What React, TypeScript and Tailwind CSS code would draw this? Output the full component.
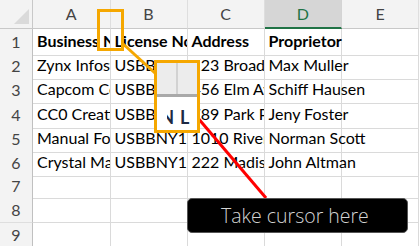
const cols = ['A', 'B', 'C', 'D', 'E']

const rows: string[][] = [
  ['Business Name', 'License No', 'Address', 'Proprietor'],
  ['Zynx Infosys', 'USBBNY1234', '123 Broadway', 'Max Muller'],
  ['Capcom Co', 'USBBNY1235', '456 Elm Ave', 'Schiff Hausen'],
  ['CC0 Creations', 'USBBNY1236', '789 Park Pl', 'Jeny Foster'],
  ['Manual Fox', 'USBBNY1237', '1010 River Rd', 'Norman Scott'],
  ['Crystal Mart', 'USBBNY1238', '222 Madison', 'John Altman'],
  [],
  [],
  [],
]

const grid = 'grid grid-cols-[33px_77.5px_77px_77px_77.5px_77px]'

export default function App() {
  return (
    <div className="relative h-[246px] w-[420px] overflow-hidden bg-white font-['Lato',sans-serif] text-[16px] text-black">
      {/* column headers */}
      <div className={`${grid} h-[29px] bg-[#f3f3f3]`}>
        <div className="relative border-r border-b border-[#c8c8c8]">
          <div className="absolute bottom-[4px] right-[3px] h-0 w-0 border-b-[15px] border-l-[15px] border-b-[#dadada] border-l-transparent" />
        </div>
        {cols.map((c) => (
          <div
            key={c}
            className={
              c === 'D'
                ? 'flex items-center justify-center border-r border-b-2 border-r-[#d4d4d4] border-b-[#217346] bg-[#d6d6d6] text-[#217346]'
                : 'flex items-center justify-center border-r border-b border-r-[#dedede] border-b-[#c8c8c8] text-[#444]'
            }
          >
            {c}
          </div>
        ))}
      </div>

      {rows.map((r, i) => (
        <div key={i} className={`${grid} h-[24.2px]`}>
          <div className="flex items-center justify-center border-r border-b border-r-[#c0c0c0] border-b-[#dedede] bg-[#f3f3f3] text-[#444]">
            {i + 1}
          </div>
          {[0, 1, 2, 3, 4].map((j) => (
            <div
              key={j}
              className={`flex items-end whitespace-nowrap border-r border-b border-[#dadada] pb-[2px] pl-[4px] ${
                j === 3 ? 'overflow-visible' : 'overflow-hidden'
              } ${i === 0 ? 'font-bold' : ''}`}
            >
              {r[j] ?? ''}
            </div>
          ))}
        </div>
      ))}

      {/* small orange marker on the A|B divider */}
      <div className="absolute left-[97px] top-[9px] h-[42px] w-[27px] border-[3px] border-[#f5a700]" />

      <svg className="absolute left-0 top-0" width="420" height="246">
        <line x1="122" y1="43" x2="156" y2="74" stroke="#f5a700" strokeWidth="3" />
        <line x1="266" y1="198" x2="186" y2="104" stroke="#ff0000" strokeWidth="3" />
        <polygon points="179,96 193,102 184,109" fill="#ff0000" />
      </svg>

      {/* magnified inset */}
      <div className="absolute left-[154px] top-[60px] flex h-[73px] w-[46px] flex-col overflow-hidden border-[3px] border-[#f5a700] bg-white">
        <div className="flex h-[31px] shrink-0 bg-[#ececec]">
          <div className="w-[21px] border-r-2 border-[#d2d2d2]" />
        </div>
        <div className="h-[3px] shrink-0 bg-[#a9a9a9]" />
        <div className="relative flex-1 overflow-hidden">
          <div className="absolute left-[10px] top-[11px] h-[20px] w-[7px] overflow-hidden">
            <span className="absolute right-0 top-0 text-[18px] font-bold leading-none text-[#1e2a44]">N</span>
          </div>
          <span className="absolute left-[23px] top-[11px] text-[18px] font-bold leading-none text-[#1e2a44]">L</span>
        </div>
      </div>

      {/* callout */}
      <div className="absolute left-[187px] top-[198px] flex h-[35px] w-[221px] items-center rounded-[5px] border border-[#555] bg-black pl-[33px] font-['Open_Sans',sans-serif] text-[19.5px] font-light text-[#d4d4d4]">
        Take cursor here
      </div>
    </div>
  )
}
